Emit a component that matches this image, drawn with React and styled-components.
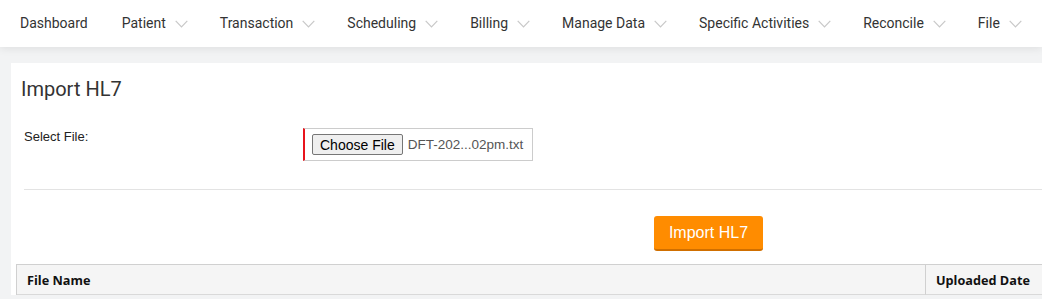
import React from "react";
import styled, { createGlobalStyle } from "styled-components";

const Global = createGlobalStyle`
  html, body { margin: 0; padding: 0; background: #f2f3f4; overflow: hidden; }
  body { font-family: Roboto, "Liberation Sans", Arial, sans-serif; color: #333; }
  * { box-sizing: border-box; }
`;

const Page = styled.div`
  width: 1042px;
  height: 299px;
  overflow: hidden;
  background: #f2f3f4;
`;

const NavBar = styled.nav`
  position: relative;
  z-index: 2;
  height: 47px;
  background: #fff;
  display: flex;
  align-items: center;
  padding: 0 0 2px 20px;
  box-shadow: 0 2px 8px rgba(0, 0, 0, 0.08);
  white-space: nowrap;
`;

const NavItem = styled.div`
  display: flex;
  align-items: center;
  font-family: Roboto, sans-serif;
  font-size: 14px;
  color: #333;
  margin-right: ${(p) => p.$gap}px;
  flex: none;
`;

const Chevron = styled.svg`
  width: 13px;
  height: 8px;
  margin-left: 9px;
  margin-top: 2px;
`;

const Card = styled.div`
  margin: 16px 0 0 11px;
  background: #fff;
  padding: 14px 0 0 0;
  width: 1100px;
`;

const Title = styled.h2`
  margin: 0 0 0 10px;
  font-family: Roboto, sans-serif;
  font-weight: 400;
  font-size: 20px;
  color: #333;
  line-height: 24px;
`;

const FormRow = styled.div`
  display: flex;
  align-items: flex-start;
  margin: 27px 0 0 13px;
`;

const Label = styled.label`
  width: 279px;
  font-family: "Liberation Sans", Arial, sans-serif;
  font-size: 13px;
  color: #222;
  padding-top: 1px;
`;

const FileBox = styled.div`
  width: 230px;
  height: 33px;
  border: 1px solid #ccc;
  border-left: 2px solid #e8141c;
  display: flex;
  align-items: center;
  padding-left: 7px;
  gap: 5px;
`;

const FileButton = styled.span`
  display: inline-flex;
  align-items: center;
  height: 21px;
  padding: 0 7px;
  border: 1px solid #767676;
  border-radius: 2px;
  background: #efefef;
  font-family: "Liberation Sans", Arial, sans-serif;
  font-size: 14px;
  color: #000;
`;

const FileName = styled.span`
  font-family: "Liberation Sans", Arial, sans-serif;
  font-size: 13.5px;
  color: #555;
`;

const Divider = styled.hr`
  border: 0;
  border-top: 1px solid #e3e3e3;
  margin: 28px 0 0 13px;
`;

const ActionRow = styled.div`
  display: flex;
  padding: 26px 0 0 643px;
`;

const PrimaryButton = styled.button`
  width: 109px;
  height: 35px;
  border: 0;
  border-bottom: 2px solid #d06f00;
  border-radius: 3px;
  background: #ff8c00;
  color: #fff;
  font-family: "Liberation Sans", Arial, sans-serif;
  font-size: 16px;
  padding: 0;
`;

const Table = styled.div`
  display: grid;
  grid-template-columns: 908px 1fr;
  margin: 13px 0 0 5px;
  border: 1px solid #d0d0d0;
  border-bottom: 0;
`;

const HeadCell = styled.div`
  height: 30px;
  background: #f5f5f5;
  border-bottom: 1px solid #d9d9d9;
  border-left: ${(p) => (p.$first ? "0" : "1px solid #d0d0d0")};
  display: flex;
  align-items: center;
  padding-left: 10px;
  font-family: "Open Sans", sans-serif;
  font-weight: 700;
  font-size: 12.7px;
  color: #111;
`;

const items = [
  { label: "Dashboard", gap: 34, chevron: false },
  { label: "Patient", gap: 32 },
  { label: "Transaction", gap: 32 },
  { label: "Scheduling", gap: 32 },
  { label: "Billing", gap: 32 },
  { label: "Manage Data", gap: 32 },
  { label: "Specific Activities", gap: 32 },
  { label: "Reconcile", gap: 32 },
  { label: "File", gap: 20 },
];

export default function App() {
  return (
    <Page>
      <Global />
      <NavBar>
        {items.map((it) => (
          <NavItem key={it.label} $gap={it.gap}>
            {it.label}
            {it.chevron !== false && (
              <Chevron viewBox="0 0 13 8">
                <path d="M0.7 0.8 L6.5 6.8 L12.3 0.8" fill="none" stroke="#c8c8c8" strokeWidth="1.2" />
              </Chevron>
            )}
          </NavItem>
        ))}
      </NavBar>
      <Card>
        <Title>Import HL7</Title>
        <FormRow>
          <Label>Select File:</Label>
          <FileBox>
            <FileButton>Choose File</FileButton>
            <FileName>DFT-202...02pm.txt</FileName>
          </FileBox>
        </FormRow>
        <Divider />
        <ActionRow>
          <PrimaryButton>Import HL7</PrimaryButton>
        </ActionRow>
        <Table>
          <HeadCell $first>File Name</HeadCell>
          <HeadCell>Uploaded Date</HeadCell>
        </Table>
      </Card>
    </Page>
  );
}
